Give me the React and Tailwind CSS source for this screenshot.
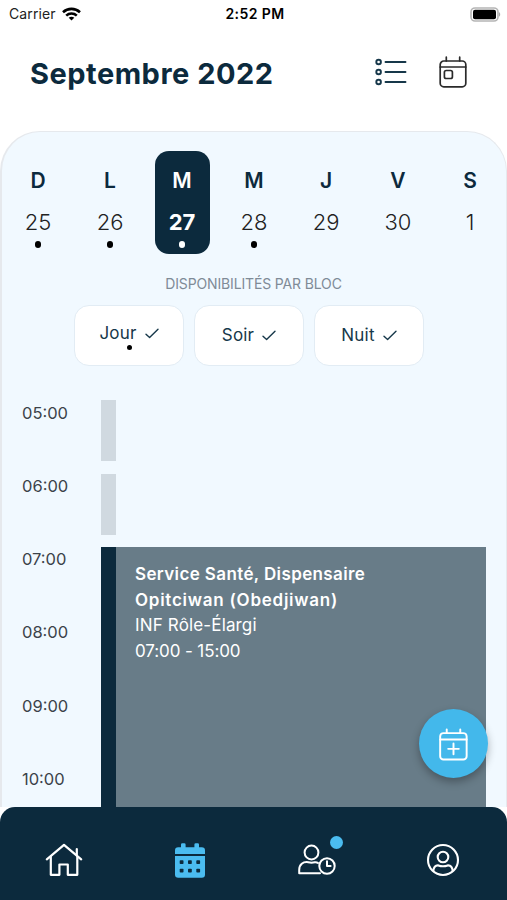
import React, { useState } from 'react';
import clsx from 'clsx';

const days = [
  { letter: 'D', date: 25, dot: true },
  { letter: 'L', date: 26, dot: true },
  { letter: 'M', date: 27, dot: true },
  { letter: 'M', date: 28, dot: true },
  { letter: 'J', date: 29, dot: false },
  { letter: 'V', date: 30, dot: false },
  { letter: 'S', date: 1, dot: false }
];

const blocs = [
  { label: 'Jour', dot: true },
  { label: 'Soir', dot: false },
  { label: 'Nuit', dot: false }
];

const hours = ['05:00', '06:00', '07:00', '08:00', '09:00', '10:00'];

function StatusBar() {
  return <div className="flex h-7 shrink-0 items-center justify-between pl-[9px] pr-[6px] text-black">
      <div className="flex w-[120px] items-center gap-[6px]">
        <span className="text-[14px] leading-7 tracking-[0.1px] text-[#222]">Carrier</span>
        <svg width="19" height="14" viewBox="0 0 19 14" fill="none" stroke="black" strokeWidth="2.6">
          <path d="M1 5.2C5.8.8 13.2.8 18 5.2" />
          <path d="M4.2 8.6c3-2.8 7.6-2.8 10.6 0" />
          <path d="M9.5 13.6 6.7 10.8c1.5-1.4 4.1-1.4 5.6 0z" fill="black" stroke="none" />
        </svg>
      </div>
      <span className="text-[14px] font-semibold leading-7 tracking-[0.4px]">2:52 PM</span>
      <div className="flex w-[120px] justify-end">
        <svg width="31" height="15" viewBox="0 0 31 15">
          <rect x="1" y="1" width="27" height="13" rx="4" fill="#fff" stroke="#b5b5b5" strokeWidth="1.6" />
          <rect x="3" y="2.8" width="23" height="9.4" rx="2" fill="#000" />
          <path d="M29 5.3c1.6.6 1.6 3.8 0 4.4z" fill="#aaa" />
        </svg>
      </div>
    </div>;
}

function ListIcon() {
  return <svg width="32" height="28" viewBox="0 0 32 28" fill="none" stroke="#17384a" strokeWidth="1.9" strokeLinecap="round">
      <circle cx="3.6" cy="4" r="2.3" />
      <circle cx="3.6" cy="14" r="2.3" />
      <circle cx="3.6" cy="24" r="2.3" />
      <path d="M10.5 4h20M10.5 14h20M10.5 24h20" />
    </svg>;
}

function TodayIcon() {
  return <svg width="28" height="32" viewBox="0 0 28 32" fill="none" stroke="#2a2a2a" strokeWidth="1.7" strokeLinecap="round">
      <rect x="1.2" y="5" width="25.6" height="25.8" rx="3.6" />
      <path d="M1.2 11h25.6M7.3 1.2V5M20.7 1.2V5" />
      <rect x="5.4" y="14.5" width="8" height="8" rx="1.8" />
    </svg>;
}

function Check() {
  return <svg width="14" height="11" viewBox="0 0 14 11" fill="none" stroke="#17384a" strokeWidth="1.4" strokeLinecap="round" strokeLinejoin="round">
      <path d="M1 6.2 4.6 9.6 13 1.2" />
    </svg>;
}

function AddIcon() {
  return <svg className="mt-px" width="29" height="33" viewBox="0 0 30 34" fill="none" stroke="white" strokeWidth="2" strokeLinecap="round">
      <rect x="1.2" y="5.2" width="27.4" height="27.4" rx="3.4" />
      <path d="M1.2 11.8h27.4M8 1.4v3.8M22 1.4v3.8M15 16v11M9.5 21.5h11" />
    </svg>;
}

function HomeIcon() {
  return <svg width="38" height="34" viewBox="0 0 38 34" fill="none" stroke="white" strokeWidth="2.2" strokeLinecap="round" strokeLinejoin="round">
      <path d="M1.8 16.3 19 1.8l17.2 14.5" />
      <path d="M5.8 13.5v18.3h8.6V21.5h8.4v10.3h9.5V13.5" />
      <path d="M31.8 6v6" />
    </svg>;
}

function CalendarIcon() {
  return <svg width="30" height="35" viewBox="0 0 30 35">
      <path d="M0 11V7.5A3.2 3.2 0 0 1 3.2 4.3H6V1.5A1.3 1.3 0 0 1 7.3.2h2a1.3 1.3 0 0 1 1.3 1.3v2.8h8.8V1.5A1.3 1.3 0 0 1 20.7.2h2A1.3 1.3 0 0 1 24 1.5v2.8h2.8A3.2 3.2 0 0 1 30 7.5V11z" fill="#4bbcf0" />
      <path d="M0 13h30v18.5a3.2 3.2 0 0 1-3.2 3.2H3.2A3.2 3.2 0 0 1 0 31.5z" fill="#4bbcf0" />
      <g fill="#0c2a3d">
        <rect x="4.7" y="17.3" width="3.8" height="3.8" rx=".8" />
        <rect x="13" y="17.3" width="3.8" height="3.8" rx=".8" />
        <rect x="21.3" y="17.3" width="3.8" height="3.8" rx=".8" />
        <rect x="4.7" y="25.8" width="3.8" height="3.8" rx=".8" />
        <rect x="13" y="25.8" width="3.8" height="3.8" rx=".8" />
        <rect x="21.3" y="25.8" width="3.8" height="3.8" rx=".8" />
      </g>
    </svg>;
}

function PendingIcon() {
  return <svg width="38" height="32" viewBox="0 0 38 32" fill="none" stroke="white" strokeWidth="2" strokeLinecap="round" strokeLinejoin="round">
      <circle cx="13.5" cy="8.5" r="6.9" />
      <path d="M20 19c-1-.8-2-1-3.2-.8-2.2.6-4.4.6-6.6 0C5 17.5 1.2 20.5 1.2 26v3.3H22" />
      <circle cx="29" cy="22" r="7.7" />
      <path d="M29 17.3V22h3.6" />
    </svg>;
}

function ProfileIcon() {
  return <svg width="34" height="34" viewBox="0 0 34 34" fill="none" stroke="white" strokeWidth="2.1">
      <circle cx="17" cy="17" r="15" />
      <circle cx="17" cy="14" r="5.3" />
      <path d="M7.3 28.3c0-4 2.2-6.2 5-5.9 3.2 1.1 6.2 1.1 9.4 0 2.8-.3 5 1.9 5 5.9" />
    </svg>;
}

export default function App() {
  const [selected, setSelected] = useState(2);
  return <div className="relative flex h-[900px] w-[507px] flex-col overflow-hidden bg-white font-['Inter','Liberation_Sans',sans-serif]">
      <StatusBar />

      {/* Header */}
      <header className="flex h-[103px] shrink-0 items-start justify-between pl-[30px] pr-[40px] pt-[28px]">
        <h1 className="whitespace-nowrap text-[29px] font-bold leading-9 tracking-[0.5px] text-[#0c2a3d]">Septembre 2022</h1>
        <div className="flex items-center gap-[32px]">
          <ListIcon />
          <TodayIcon />
        </div>
      </header>

      <main className="flex h-[676px] shrink-0 flex-col overflow-hidden rounded-t-[40px] border border-b-0 border-l-2 border-[#e6e9ed] bg-[#f1f9ff] pt-[19px]">
        {/* Week */}
        <div className="grid h-[103px] w-[504px] shrink-0 grid-cols-7">
          {days.map((day, i) => <button key={i} onClick={() => setSelected(i)} className={clsx('mx-auto flex w-[55px] flex-col items-center rounded-[14px] pt-[14px]', i === selected ? 'bg-[#0c2a3d] font-bold text-white' : 'font-light text-[#222]')}>
              <span className={clsx('text-[21px] font-semibold leading-8', i === selected ? 'text-white' : 'text-[#0c2a3d]')}>{day.letter}</span>
              <span className="mt-[9px] text-[22px] leading-8">{day.date}</span>
              {day.dot && <span className={clsx('mt-[3px] size-[6.5px] rounded-full', i === selected ? 'bg-white' : 'bg-black')} />}
            </button>)}
        </div>

        <h2 className="mt-[20px] pr-px text-center text-[14px] leading-5 tracking-[-0.15px] text-[#7f8b97]">DISPONIBILITÉS PAR BLOC</h2>

        <div className="mt-[11px] flex shrink-0 justify-center gap-[10px] pr-[10px]">
          {blocs.map(bloc => <button key={bloc.label} className="flex h-[61px] w-[110px] flex-col items-center justify-center rounded-[15px] border border-[#e2ecf4] bg-white pb-px">
              <span className="flex items-center gap-[8px] text-[17px] leading-6 tracking-[0.2px] text-[#17384a]">
                {bloc.label}
                <Check />
              </span>
              {bloc.dot && <span className="mb-[-1px] size-[5px] rounded-full bg-black" />}
            </button>)}
        </div>

        {/* Timeline */}
        <div className="mt-[34px] flex shrink-0 pl-[20px]">
          <div className="w-[79px] pt-[0.5px] text-[16.5px] leading-6 text-[#3c434a]">
            {hours.map(hour => <div key={hour} className="h-[73.3px]">{hour}</div>)}
          </div>
          <div className="flex w-[385px] flex-col">
            <div className="mb-[12.5px] h-[61px] w-[15px] bg-[#d0d9e0]" />
            <div className="mb-[12.5px] h-[61px] w-[15px] bg-[#d0d9e0]" />
            <div className="h-[280px] border-l-[15px] border-[#0c2a3d] bg-[#687c88] pl-[19px] pt-[15px] text-[17px] leading-[25.6px] text-white">
              <p className="font-semibold tracking-[0.38px]">Service Santé, Dispensaire</p>
              <p className="font-semibold tracking-[0.75px]">Opitciwan (Obedjiwan)</p>
              <p className="tracking-[0.15px]">INF Rôle-Élargi</p>
              <p className="tracking-[-0.1px]">07:00 - 15:00</p>
            </div>
          </div>
        </div>
      </main>

      {/* Floating button */}
      <button className="absolute left-[419px] top-[709px] flex size-[69px] items-center justify-center rounded-full bg-[#43b8eb] pr-px shadow-[0_4px_8px_rgba(0,0,0,0.3)]">
        <AddIcon />
      </button>

      {/* Bottom navigation */}
      <nav className="grid h-[93px] shrink-0 grid-cols-4 rounded-t-[15px] bg-[#0c2a3d] pb-px pl-px pr-px pt-[14px]">
        <div className="flex items-center justify-center"><HomeIcon /></div>
        <div className="flex items-center justify-center"><CalendarIcon /></div>
        <div className="flex items-center justify-center">
          <div className="relative">
            <PendingIcon />
            <span className="absolute right-[-7px] top-[-8px] size-[13px] rounded-full bg-[#4bbcf0]" />
          </div>
        </div>
        <div className="flex items-center justify-center"><ProfileIcon /></div>
      </nav>
    </div>;
}
